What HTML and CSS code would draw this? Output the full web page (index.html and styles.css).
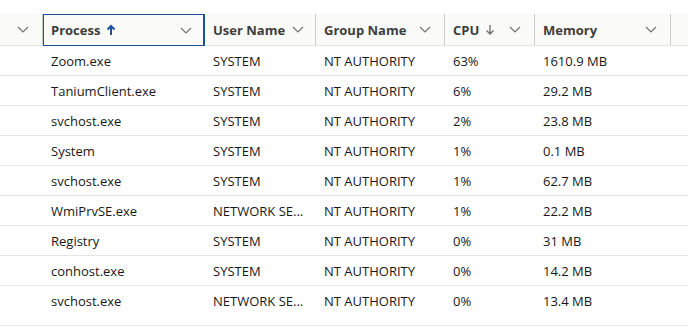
FILE: index.html
```html
<!DOCTYPE html>
<html>
<head>
<meta charset="utf-8">
<link rel="stylesheet" href="styles.css">
</head>
<body>
<div class="table">
  <div class="row head">
    <div class="cell c0"><span class="label"></span><svg class="chev" viewBox="0 0 12 7"><path d="M1 1 L6 6 L11 1" /></svg></div>
    <div class="cell c1 focus"><span class="label">Process<svg class="arrow up" viewBox="0 0 10 12"><path d="M5 11 V2 M1.5 5.5 L5 2 L8.5 5.5" /></svg></span><svg class="chev" viewBox="0 0 12 7"><path d="M1 1 L6 6 L11 1" /></svg></div>
    <div class="cell c2"><span class="label">User Name</span><svg class="chev near" viewBox="0 0 12 7"><path d="M1 1 L6 6 L11 1" /></svg></div>
    <div class="cell c3"><span class="label">Group Name</span><svg class="chev" viewBox="0 0 12 7"><path d="M1 1 L6 6 L11 1" /></svg></div>
    <div class="cell c4"><span class="label">CPU<svg class="arrow down" viewBox="0 0 10 12"><path d="M5 1 V10 M1.5 6.5 L5 10 L8.5 6.5" /></svg></span><svg class="chev" viewBox="0 0 12 7"><path d="M1 1 L6 6 L11 1" /></svg></div>
    <div class="cell c5"><span class="label">Memory</span><svg class="chev" viewBox="0 0 12 7"><path d="M1 1 L6 6 L11 1" /></svg></div>
    <div class="cell c6"></div>
  </div>
  <div class="row"><div class="cell c0"></div><div class="cell c1">Zoom.exe</div><div class="cell c2">SYSTEM</div><div class="cell c3">NT AUTHORITY</div><div class="cell c4">63%</div><div class="cell c5">1610.9 MB</div><div class="cell c6"></div></div>
  <div class="row"><div class="cell c0"></div><div class="cell c1">TaniumClient.exe</div><div class="cell c2">SYSTEM</div><div class="cell c3">NT AUTHORITY</div><div class="cell c4">6%</div><div class="cell c5">29.2 MB</div><div class="cell c6"></div></div>
  <div class="row"><div class="cell c0"></div><div class="cell c1">svchost.exe</div><div class="cell c2">SYSTEM</div><div class="cell c3">NT AUTHORITY</div><div class="cell c4">2%</div><div class="cell c5">23.8 MB</div><div class="cell c6"></div></div>
  <div class="row"><div class="cell c0"></div><div class="cell c1">System</div><div class="cell c2">SYSTEM</div><div class="cell c3">NT AUTHORITY</div><div class="cell c4">1%</div><div class="cell c5">0.1 MB</div><div class="cell c6"></div></div>
  <div class="row"><div class="cell c0"></div><div class="cell c1">svchost.exe</div><div class="cell c2">SYSTEM</div><div class="cell c3">NT AUTHORITY</div><div class="cell c4">1%</div><div class="cell c5">62.7 MB</div><div class="cell c6"></div></div>
  <div class="row"><div class="cell c0"></div><div class="cell c1">WmiPrvSE.exe</div><div class="cell c2" title="NETWORK SERVICE">NETWORK SE...</div><div class="cell c3">NT AUTHORITY</div><div class="cell c4">1%</div><div class="cell c5">22.2 MB</div><div class="cell c6"></div></div>
  <div class="row"><div class="cell c0"></div><div class="cell c1">Registry</div><div class="cell c2">SYSTEM</div><div class="cell c3">NT AUTHORITY</div><div class="cell c4">0%</div><div class="cell c5">31 MB</div><div class="cell c6"></div></div>
  <div class="row"><div class="cell c0"></div><div class="cell c1">conhost.exe</div><div class="cell c2">SYSTEM</div><div class="cell c3">NT AUTHORITY</div><div class="cell c4">0%</div><div class="cell c5">14.2 MB</div><div class="cell c6"></div></div>
  <div class="row last"><div class="cell c0"></div><div class="cell c1">svchost.exe</div><div class="cell c2" title="NETWORK SERVICE">NETWORK SE...</div><div class="cell c3">NT AUTHORITY</div><div class="cell c4">0%</div><div class="cell c5">13.4 MB</div><div class="cell c6"></div></div>
</div>
</body>
</html>
```
FILE: styles.css
```css
* { box-sizing: border-box; }
html, body { margin: 0; padding: 0; background: #fff; }
body {
  font-family: "Open Sans", "Liberation Sans", sans-serif;
  font-size: 13px;
  color: #181818;
  padding-top: 14px;
  width: 688px;
  overflow: hidden;
}
.table { display: flex; flex-direction: column; }
.row {
  display: grid;
  grid-template-columns: 43px 162px 111px 129px 90px 136px 17px;
  height: 30px;
  border-bottom: 1px solid #e5e5e5;
}
.row.last { height: 40px; }
.cell {
  display: flex;
  align-items: center;
  padding-left: 8px;
  height: 29px;
  white-space: nowrap;
  overflow: hidden;
}
.head {
  height: 32px;
  background: #fafaf9;
  border-bottom: 1px solid #e5e5e5;
}
.head .cell {
  height: 31px;
  border-right: 1px solid #c9c9c9;
  font-weight: 700;
  color: #3e3e3c;
  justify-content: space-between;
  padding-right: 13px;
}
.head .cell.c6 { border-right: none; }
.head .cell.focus {
  border: 1px solid #1b5297;
  border-right: 2px solid #1b5297;
  padding-left: 7px;
  height: 32px;
  padding-right: 11px;
}
.head .cell.c2 { justify-content: flex-start; }
.head .cell.c2 .chev { margin-left: 7px; }
.label { display: flex; align-items: center; }
.chev { width: 12px; height: 7px; flex: none; }
.chev path { fill: none; stroke: #747474; stroke-width: 1.2; }
.arrow { width: 10px; height: 12px; margin-left: 6px; }
.arrow path { fill: none; stroke-width: 1.6; }
.arrow.up path { stroke: #1b5297; stroke-width: 2; }
.arrow.down path { stroke: #706e6b; stroke-width: 1.3; }
```
